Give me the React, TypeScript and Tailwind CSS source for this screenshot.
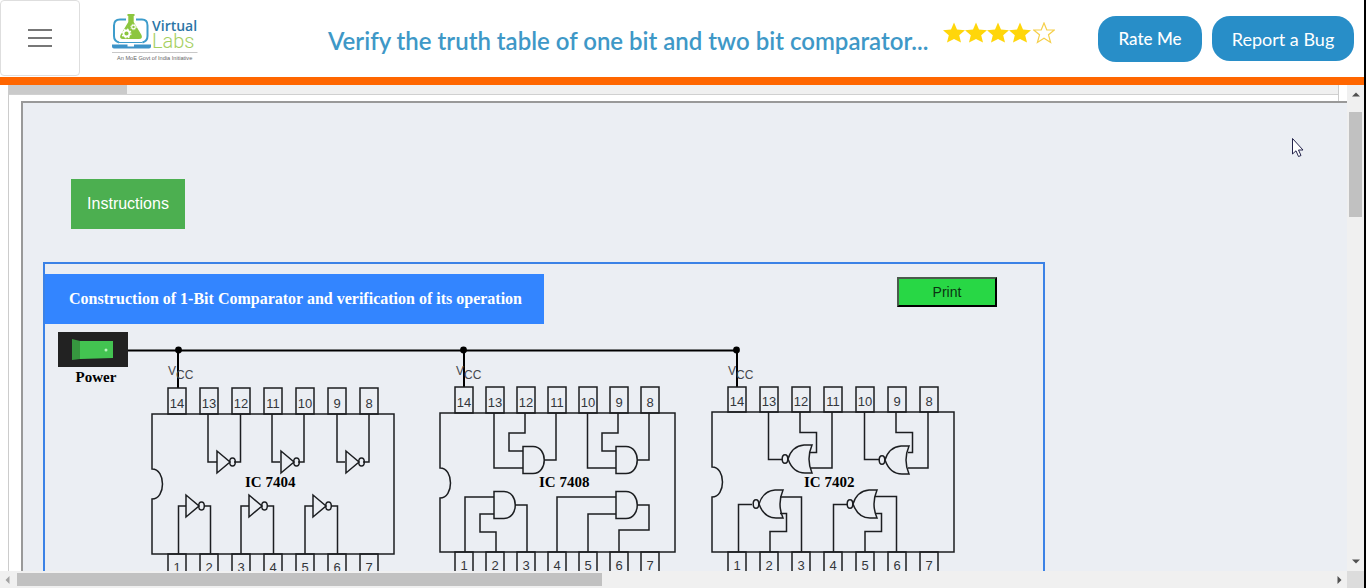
import type { ReactNode } from "react";

const STROKE = "#1c1e21";

function Star({ filled }: { filled: boolean }) {
  return (
    <svg width="22" height="22" viewBox="0 0 22 22" aria-hidden="true">
      <path
        d={
          filled
            ? "M11 .5L14 7.500L22 8.300L16.200 13.200L18 20.500L11 17L4 20.500L5.800 13.200L0 8.300L8 7.500Z"
            : "M11 1L13.800 8H21.300L15.500 12.800L17.600 20.500L11 16.200L4.400 20.500L6.500 12.800L.7 8H8.200Z"
        }
        fill={filled ? "#ffd60a" : "#fff"}
        stroke={filled ? "none" : "#f5cf4a"}
        strokeWidth="1.2"
      />
    </svg>
  );
}

function Logo() {
  return (
    <svg width="90" height="50" viewBox="110 12 90 50" role="img" aria-label="Virtual Labs">
      <path d="M126 19.500H120q-6 0-6 6V36q0 5 5 6.500M136 19.500H142q5.500 0 5.500 6V36q0 5-5 6.500" fill="none" stroke="#3d9ccb" strokeWidth="2" />
      <path d="M119 42.500H142.500" stroke="#3d9ccb" strokeWidth="1" />
      <path d="M112 44.500H127.500V46.500H134V44.500H151V46.500Q151 48.500 149 48.500H114Q112 48.500 112 46.500Z" fill="#3d93c8" />
      <path d="M127.500 14H134.500V16H133.700V22L141.500 35Q143 39 139 39H123Q119 39 120.500 35L128.300 22V16H127.500Z" fill="#8cc63f" />
      <circle cx="126.500" cy="33.500" r="3" fill="none" stroke="#fff" strokeWidth="1.800" />
      <circle cx="126.500" cy="33.500" r="4.400" fill="none" stroke="#fff" strokeWidth="1.200" strokeDasharray="1.700 1.750" />
      <circle cx="133.500" cy="27" r="1.800" fill="none" stroke="#fff" strokeWidth="1.200" />
      <circle cx="133.500" cy="27" r="2.800" fill="none" stroke="#fff" strokeWidth=".8" strokeDasharray="1.100 1.100" />
      <text x="152" y="31" fontSize="14" fontWeight="600" fontFamily="'Open Sans', sans-serif" fill="#2b76a6">Virtual</text>
      <text x="152" y="48" fontSize="20" fontWeight="300" fontFamily="Roboto, sans-serif" fill="#a5cf5f">Labs</text>
      <path d="M112 52.500H197.500" stroke="#c8c8c8" strokeWidth="1" />
      <text x="117" y="59.500" fontSize="5.600" fontFamily="'Liberation Sans', sans-serif" fill="#666">An MoE Govt of India Initiative</text>
    </svg>
  );
}

type ChipProps = {
  label: string;
  labelX: number;
  left: number;
  right: number;
  top: number;
  bottom: number;
  pins: number[];
  pinTop: number;
  vccX: number;
  children: ReactNode;
};

function Chip({ label, labelX, left, right, top, bottom, pins, pinTop, vccX, children }: ChipProps) {
  const mid = top + 70;
  return (
    <g fill="none" stroke={STROKE} strokeWidth="1.500">
      <path d={`M${left} ${top}H${right}V${bottom}H${left}V${mid + 15}C${left + 14} ${mid + 15} ${left + 14} ${mid - 15} ${left} ${mid - 15}Z`} />
      {pins.map((x, i) => (
        <g key={x}>
          <rect x={x - 9} y={pinTop} width="18" height={top - pinTop} />
          <path d={`M${x - 9} ${bottom + 30}V${bottom}H${x + 9}V${bottom + 30}`} />
          <g fill="#33363b" stroke="none" fontSize="13" fontFamily="'Liberation Sans', sans-serif" textAnchor="middle">
            <text x={x} y={top - 6}>{14 - i}</text>
            <text x={x} y={bottom + 18}>{i + 1}</text>
          </g>
        </g>
      ))}
      <text x={vccX} y="375" fill="#44474c" stroke="none" fontSize="12" fontFamily="'Liberation Sans', sans-serif">
        V<tspan dy="4">CC</tspan>
      </text>
      {children}
      <text x={labelX} y="487" fill="#000" stroke="none" fontSize="15" fontWeight="700" fontFamily="'Liberation Serif', serif">{label}</text>
    </g>
  );
}

function Inverter({ x, y }: { x: number; y: number }) {
  return (
    <>
      <path d={`M${x} ${y - 11}V${y + 11}L${x + 13} ${y}Z`} />
      <ellipse cx={x + 15.5} cy={y} rx="2.800" ry="4" />
    </>
  );
}

function AndGate({ x, y }: { x: number; y: number }) {
  return <path d={`M${x} ${y - 13.5}H${x + 10}C${x + 25} ${y - 13.5} ${x + 25} ${y + 13.5} ${x + 10} ${y + 13.5}H${x}Z`} />;
}

function NorGate({ x, y }: { x: number; y: number }) {
  return (
    <>
      <ellipse cx={x} cy={y} rx="2.800" ry="4.300" />
      <path d={`M${x + 27} ${y - 14}H${x + 19}Q${x + 7} ${y - 13} ${x + 3} ${y}Q${x + 8} ${y + 14} ${x + 20} ${y + 14}H${x + 27}Q${x + 21} ${y} ${x + 27} ${y - 14}Z`} />
    </>
  );
}

function Circuit() {
  return (
    <svg className="block shrink-0" width="916" height="270" viewBox="128 324 916 270" role="img" aria-label="IC pin diagrams">
      <path d="M128 350.500H737M178 350V388M464 350V387M737 350V387" fill="none" stroke="#000" strokeWidth="2" />
      <circle cx="178.500" cy="350" r="3.400" />
      <circle cx="463.500" cy="350" r="3.400" />
      <circle cx="736.500" cy="350" r="3.400" />

      <Chip label="IC 7404" labelX={245} left={152} right={394} top={414} bottom={554} pins={[177, 209, 241, 273, 305, 337, 369]} pinTop={388} vccX={168}>
        <path d="M208 414V462H217M234 462H240.500V414M272 414V462H280M298 462H304V414M337 414V462H345M363 462H369V414" />
        <path d="M178.500 554V506H186M204 506H210.500V554M241 554V506H249M267 506H273.500V554M305 554V506H313M331 506H337.500V554" />
        <Inverter x={217} y={462} />
        <Inverter x={281} y={462} />
        <Inverter x={346} y={462} />
        <Inverter x={186} y={506} />
        <Inverter x={249} y={506} />
        <Inverter x={313} y={506} />
      </Chip>

      <Chip label="IC 7408" labelX={539} left={440} right={675} top={413} bottom={552} pins={[464, 495, 526, 557, 588, 619, 650]} pinTop={387} vccX={456}>
        <path d="M494 413V468H523M525 413V433H509V451H523M544 460H556V413" />
        <path d="M587.500 413V468H616M618 413V433H602V451H616M637 460H649V413" />
        <path d="M465 552V497H494M496 552V532H480V514H494M515 505H527V552" />
        <path d="M557 552V497H616M588 552V514H616M637 505H649V530H619V552" />
        <AndGate x={523} y={460} />
        <AndGate x={616} y={460} />
        <AndGate x={494} y={505} />
        <AndGate x={616} y={505} />
      </Chip>

      <Chip label="IC 7402" labelX={804} left={712} right={954} top={412} bottom={552} pins={[737, 769, 801, 833, 865, 897, 929]} pinTop={387} vccX={728}>
        <path d="M768.500 412V459.500H782M800 412V432.500H816.500V452.500H810M832 412V468H811" />
        <path d="M864.500 412V459.500H879M896 412V432.500H912.500V452.500H908M928 412V468H908" />
        <path d="M738.500 552V504.500H752M770 552V531.500H786.500V513.500H780M801.500 552V497H780" />
        <path d="M833.500 552V504.500H847M865 552V531.500H881.500V513.500H875M896.500 552V496.500H875" />
        <NorGate x={785} y={459} />
        <NorGate x={882} y={460} />
        <NorGate x={756} y={504} />
        <NorGate x={850} y={504} />
      </Chip>
    </svg>
  );
}

function Arrow({ className, d }: { className: string; d: string }) {
  return (
    <svg className={className} width="8" height="8" viewBox="0 0 8 8" aria-hidden="true">
      <path d={d} fill="#505050" />
    </svg>
  );
}

export default function App() {
  return (
    <div className="flex h-screen flex-col overflow-hidden border-r-2 border-black bg-white font-['Liberation_Sans',sans-serif]">
      <header className="flex shrink-0 items-start border-b-8 border-[#ff6600]">
        <button aria-label="Menu" className="mb-px flex h-[76px] w-20 items-center justify-center rounded-sm border border-[#dedede] bg-white">
          <svg width="24" height="20" viewBox="0 0 24 20" aria-hidden="true">
            <path d="M0 2H24M0 10H24M0 18H24" stroke="#777" strokeWidth="2" />
          </svg>
        </button>
        <a href="#" className="mt-3 ml-[30px] shrink-0"><Logo /></a>
        <h1 className="mt-[23px] ml-32 w-[613px] shrink-0 text-2xl leading-9 font-semibold whitespace-nowrap text-[#3e98c7] font-['Lato',sans-serif]">
          Verify the truth table of one bit and two bit comparator...
        </h1>
        <div role="img" aria-label="Rated 4 out of 5 stars" className="mt-[22px] ml-0.5 flex shrink-0">
          <Star filled /><Star filled /><Star filled /><Star filled />
          <span className="ml-0.5"><Star filled={false} /></span>
        </div>
        <div className="mt-4 mr-2.5 ml-auto flex shrink-0 items-start gap-2.5 text-white font-['Lato',sans-serif]">
          <button className="h-[46px] w-[104px] rounded-[18px] bg-[#288ec8] text-[17px] font-medium">Rate Me</button>
          <button className="h-[45px] w-[142px] rounded-[18px] bg-[#288ec8] text-lg">Report a Bug</button>
        </div>
      </header>

      <div className="flex min-h-0 flex-1">
        <main className="min-w-0 flex-1 overflow-hidden">
          <div className="ml-2 flex h-full flex-col border-l border-[#ccc]">
            <div className="mr-2 h-4 shrink-0 border-r border-[#ccc]">
              <div className="h-2.5 border-b border-[#d0d0d0] bg-[#f0f0f0]">
                <div className="h-full w-[118px] bg-[#cacaca]" />
              </div>
            </div>
            <div className="relative ml-3 min-h-0 flex-1 overflow-hidden border-t-2 border-l-2 border-[#999] bg-[#ebeef3] pl-5">
              <button className="mt-[76px] ml-7 block h-[50px] w-[114px] bg-[#4caf50] text-base text-white">Instructions</button>
              <section className="mt-[33px] w-[1002px] border-2 border-[#3b82e6] pt-2.5">
                <div className="flex items-start justify-between pr-[46px]">
                  <h2 className="flex h-[50px] w-[499px] items-center bg-[#3385ff] pl-6 text-base font-bold whitespace-nowrap text-white font-['Liberation_Serif',serif]">
                    Construction of 1-Bit Comparator and verification of its operation
                  </h2>
                  <button className="mt-[3px] h-[30px] w-[100px] border-2 border-t-[#4a5a4c] border-r-black border-b-black border-l-[#4a5a4c] bg-[#28d745] text-sm text-[#0b3312]">Print</button>
                </div>
                <div className="flex">
                  <div className="shrink-0 pt-2 pl-[13px]">
                    <button id="power" aria-labelledby="power-label" className="block h-[35px] w-[70px] bg-[#222]">
                      <svg width="70" height="35" viewBox="0 0 70 35" aria-hidden="true">
                        <path d="M14 7L22 9V27L14 28Z" fill="#36973f" />
                        <path d="M22 9H55V26L22 27Z" fill="#43c351" />
                        <circle cx="48" cy="18" r="1.500" fill="#b9f5bd" />
                      </svg>
                    </button>
                    <div id="power-label" className="pl-1.5 text-center text-[15px] leading-5 font-bold text-black font-['Liberation_Serif',serif]">Power</div>
                  </div>
                  <Circuit />
                </div>
              </section>
              <svg className="absolute top-[35px] right-[43px]" width="12" height="20" viewBox="0 0 12 20" aria-hidden="true">
                <path d="M.5 .5V16L4 12.800L6.500 18.500L9 17.500L6.500 12H11Z" fill="#fff" stroke="#23234a" strokeWidth="1" />
              </svg>
            </div>
          </div>
        </main>
        <div className="flex w-[17px] shrink-0 flex-col items-center bg-[#f0f0f0] py-1.5">
          <Arrow className="shrink-0" d="M0 5.500L4 1.500L8 5.500Z" />
          <div className="mt-[13px] h-[105px] w-[13px] bg-[#c1c1c1]" />
          <Arrow className="mt-auto shrink-0" d="M0 2.500L4 6.500L8 2.500Z" />
        </div>
      </div>
      <div className="flex h-[17px] shrink-0 bg-[#f0f0f0]">
        <div className="flex flex-1 items-center pl-1">
          <svg className="shrink-0" width="8" height="8" viewBox="0 0 8 8" aria-hidden="true">
            <path d="M5.500 0L1.500 4L5.500 8Z" fill="#a3a3a3" />
          </svg>
          <div className="ml-[5px] h-[13px] w-[585px] bg-[#c1c1c1]" />
          <Arrow className="mr-1 ml-auto shrink-0" d="M2.500 0L6.500 4L2.500 8Z" />
        </div>
        <div className="w-[17px] bg-[#dcdcdc]" />
      </div>
    </div>
  );
}
